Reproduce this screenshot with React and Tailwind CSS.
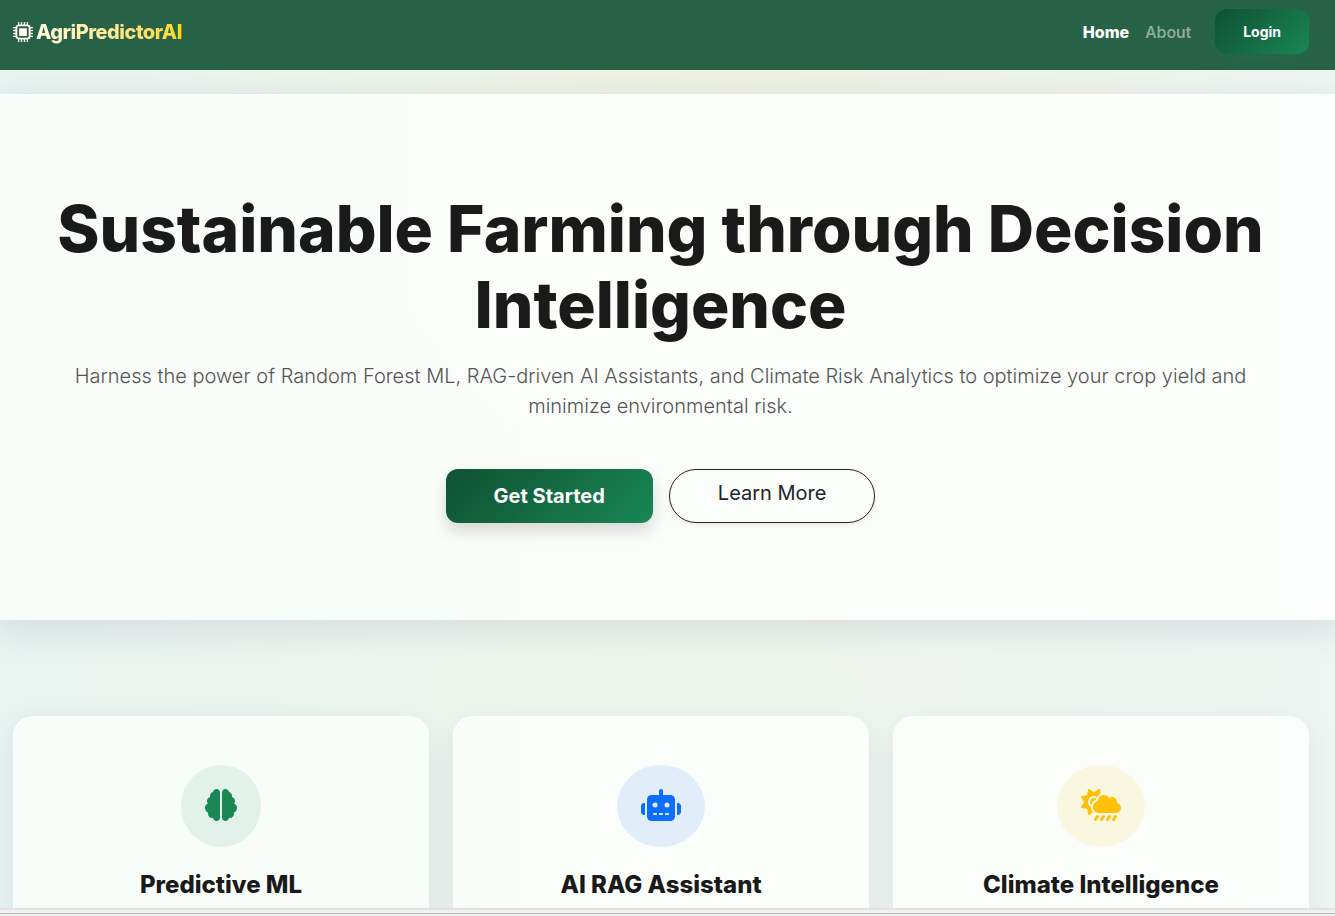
import React from 'react';
import { FaBrain, FaRobot, FaCloudSunRain } from 'react-icons/fa6';

const FEATURES = [
  { title: 'Predictive ML', icon: FaBrain, size: 'w-8', tone: 'bg-[#198754]/10 text-[#198754]' },
  { title: 'AI RAG Assistant', icon: FaRobot, size: 'w-10', tone: 'bg-[#0d6efd]/10 text-[#0d6efd]' },
  { title: 'Climate Intelligence', icon: FaCloudSunRain, size: 'w-10', tone: 'bg-[#ffc107]/10 text-[#ffc107]' },
];

const ChipIcon = ({ className }) => {
  return (
    <svg viewBox="0 0 16 16" fill="none" stroke="currentColor" className={className} aria-hidden="true">
      <rect x="2.7" y="2.7" width="10.6" height="10.6" rx="1.9" strokeWidth="1.5" />
      <rect x="4.9" y="4.9" width="6.2" height="6.2" rx="0.3" fill="currentColor" stroke="none" />
      <path
        d="M4.5.5v2M6.8.5v2M9.2.5v2M11.5.5v2M4.5 13.5v2M6.8 13.5v2M9.2 13.5v2M11.5 13.5v2M.5 4.5h2M.5 6.8h2M.5 9.2h2M.5 11.5h2M13.5 4.5h2M13.5 6.8h2M13.5 9.2h2M13.5 11.5h2"
        strokeWidth="1.1"
        strokeLinecap="round"
      />
    </svg>
  );
};

const Navbar = () => {
  return (
    <nav className="flex h-[70px] shrink-0 items-start justify-between bg-[#276246] pl-[13px] pr-[26px] pt-[9px]">
      <a href="#home" className="flex h-[45px] items-center gap-[3px] text-xl font-extrabold tracking-[-0.5px]">
        <ChipIcon className="size-5 text-[#fffdf0]" />
        <span className="bg-gradient-to-r from-[#fffbe0] to-[#ffd700] bg-clip-text text-transparent">
          AgriPredictorAI
        </span>
      </a>
      <div className="flex h-[45px] items-center">
        <a href="#home" className="px-2 font-extrabold text-white">Home</a>
        <a href="#about" className="px-2 font-medium text-white/50">About</a>
        <button className="ml-4 h-[45px] rounded-xl bg-linear-135 from-[#0f5132] to-[#198754] px-7 text-sm font-bold text-white shadow-[0_4px_15px_rgba(25,135,84,0.2)]">
          Login
        </button>
      </div>
    </nav>
  );
};

const Hero = () => {
  return (
    <section className="relative mt-6 border-y border-white/50 bg-[#fdfffd]/80 py-24 pl-3 pr-[26px] text-center shadow-[0_8px_32px_4px_rgba(31,38,110,0.1)]">
      <h1 className="text-[64px] leading-[76px] font-extrabold text-[#1a1a1a]">
        Sustainable Farming through Decision Intelligence
      </h1>
      <p className="mt-[18px] px-12 text-xl leading-[30px] font-light text-[#555]">
        Harness the power of Random Forest ML, RAG-driven AI Assistants, and Climate Risk Analytics to optimize your crop yield and minimize environmental risk.
      </p>
      <div className="mt-12 flex justify-center gap-4">
        <button className="h-[54px] rounded-xl bg-linear-135 from-[#0f5132] to-[#198754] px-12 text-xl font-bold text-white shadow-[0_8px_16px_rgba(0,0,0,0.15)]">
          Get Started
        </button>
        <a
          href="#about"
          className="rounded-full border border-[#212529] px-12 py-2 text-xl leading-[30px] text-[#212529] shadow-[0_2px_4px_rgba(0,0,0,0.08)]"
        >
          Learn More
        </a>
      </div>
    </section>
  );
};

const FeatureCard = ({ title, icon: Icon, size, tone }) => {
  return (
    <article className="flex h-[360px] flex-col items-center rounded-[20px] border border-white/50 bg-[#fdfffd]/80 p-12 shadow-[0_8px_32px_rgba(31,38,135,0.08)]">
      <div className={`rounded-[50%] px-6 pt-6 pb-[26px] ${tone}`}>
        <Icon className={`h-8 ${size}`} />
      </div>
      <h2 className="mt-6 text-2xl leading-[28px] font-extrabold text-[#1a1a1a]">{title}</h2>
    </article>
  );
};

const App = () => {
  return (
    <div className="flex h-screen flex-col bg-[#f0f0f0] font-['Inter',sans-serif]">
      <div className="min-h-0 flex-1 overflow-hidden bg-[radial-gradient(ellipse_at_55%_0%,#eff2e2_0%,transparent_55%),linear-gradient(90deg,#e8f4f0_0%,#edf5ec_40%,#eff5ee_70%,#eef5f2_100%)]">
        <Navbar />
        <Hero />
        <section className="mt-24 grid grid-cols-3 gap-6 pl-[13px] pr-[26px]">
          {FEATURES.map((feature) => (
            <FeatureCard key={feature.title} {...feature} />
          ))}
        </section>
      </div>
      {/* Window edge */}
      <div className="h-2 shrink-0 border-t-2 border-[#e2e2e2]">
        <div className="mt-[3px] h-px bg-[#b8b8b8]" />
      </div>
    </div>
  );
};

export default App;
